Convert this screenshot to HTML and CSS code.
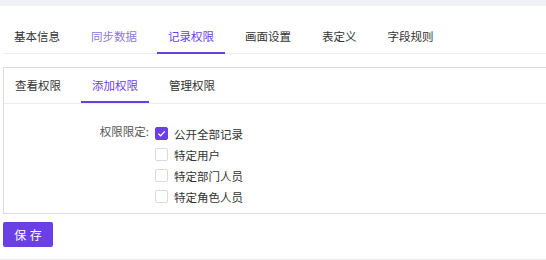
FILE: index.html
```html
<!DOCTYPE html>
<html lang="zh-CN">
<head>
<meta charset="utf-8">
<link rel="stylesheet" href="styles.css">
</head>
<body>
<div class="topbar"></div>
<div class="page">
  <div class="tabs main-tabs">
    <div class="tab">基本信息</div>
    <div class="tab hover">同步数据</div>
    <div class="tab active">记录权限</div>
    <div class="tab">画面设置</div>
    <div class="tab">表定义</div>
    <div class="tab">字段规则</div>
  </div>
  <div class="box">
    <div class="tabs sub-tabs">
      <div class="tab">查看权限</div>
      <div class="tab active">添加权限</div>
      <div class="tab">管理权限</div>
    </div>
    <div class="form">
      <div class="form-label">权限限定:</div>
      <div class="options">
        <label class="option"><span class="checkbox checked"><svg viewBox="0 0 13 13" width="13" height="13"><path d="M3.3 6.6 L5.6 8.8 L9.8 4.4" fill="none" stroke="#fff" stroke-width="1.3"/></svg></span><span>公开全部记录</span></label>
        <label class="option"><span class="checkbox"></span><span>特定用户</span></label>
        <label class="option"><span class="checkbox"></span><span>特定部门人员</span></label>
        <label class="option"><span class="checkbox"></span><span>特定角色人员</span></label>
      </div>
    </div>
  </div>
  <button class="save">保 存</button>
</div>
<div class="footer"></div>
</body>
</html>
```
FILE: styles.css
```css
html, body {
  margin: 0;
  padding: 0;
  background: #fff;
  overflow: hidden;
}
body {
  font-family: "Noto Sans CJK SC", "Noto Sans", sans-serif;
  font-size: 11.5px;
  color: #333;
}
.topbar {
  height: 6px;
  background: #f0f1f5;
}
.page {
  padding: 13px 0 0 3px;
}
.tabs {
  display: flex;
  gap: 9px;
}
.tab {
  padding: 0 11px;
  box-sizing: border-box;
  border-bottom: 2px solid transparent;
  white-space: nowrap;
}
.tab.active {
  color: #6a3fe6;
  border-bottom-color: #6a3fe6;
}
.tab.hover {
  color: #8e78dc;
}
.main-tabs {
  height: 34px;
  border-bottom: 1px solid #ededed;
}
.main-tabs .tab {
  height: 35px;
  line-height: 34px;
  margin-bottom: -1px;
}
.box {
  margin-top: 13px;
  border: 1px solid #dcdcdc;
  border-right: none;
}
.sub-tabs {
  height: 35px;
  border-bottom: 1px solid #ededed;
}
.sub-tabs .tab {
  height: 35px;
  line-height: 35px;
}
.form {
  display: flex;
  padding: 19px 0 6px 0;
}
.form-label {
  width: 145px;
  text-align: right;
  line-height: 14px;
  padding-top: 1px;
  color: #555;
}
.options {
  display: flex;
  flex-direction: column;
  margin-left: 6px;
}
.option {
  display: flex;
  align-items: center;
  height: 21px;
}
.checkbox {
  width: 13px;
  height: 13px;
  box-sizing: border-box;
  border: 1px solid #dadada;
  border-radius: 2px;
  margin-right: 6px;
  display: flex;
  align-items: center;
  justify-content: center;
}
.checkbox.checked {
  background: #6a3fe6;
  border-color: #6a3fe6;
}
.checkbox svg {
  display: block;
  flex: none;
}
.save {
  margin-top: 8px;
  width: 50px;
  height: 25px;
  border: none;
  border-radius: 2px;
  background: #6a3fe6;
  color: #fff;
  font-family: inherit;
  font-size: 12px;
  word-spacing: 1px;
  padding: 0;
  display: block;
}
.footer {
  margin-top: 12px;
  border-top: 1px solid #eeeeee;
}
```
